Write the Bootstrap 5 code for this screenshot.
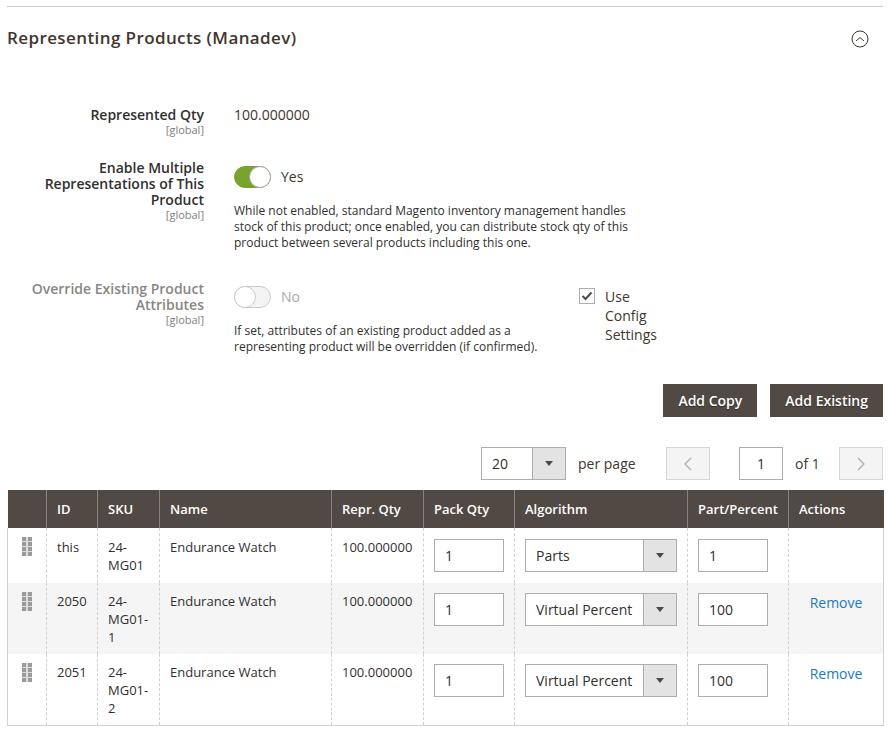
<!DOCTYPE html>
<html lang="en">
<head>
<meta charset="utf-8">
<title>Representing Products</title>
<link rel="stylesheet" href="https://cdn.jsdelivr.net/npm/bootstrap@5.3.0/dist/css/bootstrap.min.css">
<style>
html,body{background:#fff;}
body{font-family:"Open Sans",sans-serif;font-size:14px;line-height:19px;color:#41362f;overflow:hidden;}
.shell{padding:6px 6px 0 7px;}
.sec-head{border-top:1px solid #ccc;height:67px;padding-top:20px;padding-right:14px;}
.sec-title{font-size:17px;line-height:21px;font-weight:600;color:#41362f;margin:0;letter-spacing:.4px;}
.sec-chev{margin-top:3px;}
.field{display:flex;}
.lab{width:197px;flex:none;text-align:right;font-weight:600;line-height:16px;color:#303030;}
.lab.off{color:#8a8683;}
.lab .scope{display:block;font-size:11px;font-weight:400;line-height:14px;color:#808080;}
.val{margin-left:30px;}
.note{font-size:12px;line-height:16px;color:#303030;margin-top:15px;}
.tog-row{display:flex;align-items:center;gap:10px;height:22px;}
.tog-row .tog-txt{margin-bottom:2px;}
.tog-y{margin-top:6px;}
.tog-n{margin-top:5px;}
.tog{width:37px;height:22px;border-radius:11px;position:relative;flex:none;background:#79a22e;border:1px solid #79a22e;}
.tog::after{content:"";position:absolute;top:-1px;right:-1px;width:22px;height:22px;border-radius:50%;background:#fff;border:1px solid #aaa;}
.tog.no{background:#f4f4f4;border-color:#ccc;}
.tog.no::after{right:auto;left:-1px;border-color:#ccc;}
.chk{width:16px;height:16px;border:1px solid #adadad;flex:none;margin-top:1px;display:flex;align-items:center;justify-content:center;}
.admin-btn{background:#514943;color:#fff;border:0;border-radius:0;font-weight:600;font-size:14px;line-height:19px;padding:7px 15px 7px;height:33px;text-shadow:0 1px 1px rgba(0,0,0,.4);}
.box{border:1px solid #adadad;background:#fff;height:33px;display:flex;align-items:center;color:#303030;}
.sel-txt{flex:1;padding-left:10px;white-space:nowrap;}
.sel-arr{width:33px;height:100%;background:#e3e3e3;border-left:1px solid #adadad;display:flex;align-items:center;justify-content:center;flex:none;}
.sel-arr::after{content:"";border-style:solid;border-width:5px 4px 0 4px;border-color:#514943 transparent transparent;}
.pager-btn{width:44px;height:33px;background:#f4f4f4;border:1px solid #d6d6d6;display:flex;align-items:center;justify-content:center;}
.grid-tb{table-layout:fixed;width:876px;border-collapse:collapse;margin:0;font-size:13px;line-height:18px;color:#303030;}
.grid-tb th{background:#514943;color:#fff;font-weight:600;height:38px;padding:0 10px;border:0;border-left:1px solid #8a837f;vertical-align:middle;line-height:18px;}
.grid-tb th:first-child{border-left:0;}
.grid-tb td{padding:9px 10px 0;vertical-align:top;border:0;border-left:1px dashed #d1d1d1;background:transparent;box-shadow:none;}
.grid-tb .r1 td{padding-top:10px;}
.grid-tb td:first-child,.grid-tb .r1 td:first-child{border-left:1px solid #d1d1d1;padding:9px 0 0 14px;}
.grid-tb td:last-child{border-right:1px solid #d1d1d1;}
.grid-tb tbody tr{background:#fff;}
.grid-tb tbody tr.alt{background:#f5f5f5;}
.grid-tb tbody tr:last-child td{border-bottom:1px solid #d1d1d1;}
.r1{height:55px;}.r2{height:71px;}
.mini{margin-top:1px;font-size:14px;}
.qty-in{width:70px;padding-left:10px;}
.pct-in{width:70px;padding-left:10px;}
.algo{width:152px;}
.rm{color:#1979c3;text-decoration:none;font-size:14px;display:block;text-align:center;margin-top:1px;line-height:19px;}
.dragicon{display:block;}
</style>
</head>
<body>
<div class="shell">
  <div class="sec-head d-flex justify-content-between align-items-start">
    <h2 class="sec-title">Representing Products (Manadev)</h2>
    <svg width="18" height="18" viewBox="0 0 18 18" class="sec-chev" aria-hidden="true"><circle cx="9" cy="9" r="8" fill="none" stroke="#41362f" stroke-width="1"/><path d="M5 11l4-3.5 4 3.5" fill="none" stroke="#41362f" stroke-width="1"/></svg>
  </div>

  <div class="field" style="padding-top:32px">
    <div class="lab" style="padding-top:2px">Represented Qty<span class="scope">[global]</span></div>
    <div class="val">100.000000</div>
  </div>

  <div class="field" style="margin-top:23px">
    <div class="lab">Enable Multiple Representations of This Product<span class="scope">[global]</span></div>
    <div class="val">
      <div class="tog-row tog-y"><span class="tog"></span><span class="tog-txt">Yes</span></div>
      <div class="note" style="width:410px">While not enabled, standard Magento inventory management handles stock of this product; once enabled, you can distribute stock qty of this product between several products including this one.</div>
    </div>
  </div>

  <div class="field" style="margin-top:30px">
    <div class="lab off">Override Existing Product Attributes<span class="scope">[global]</span></div>
    <div class="val" style="width:345px">
      <div class="tog-row tog-n"><span class="tog no"></span><span class="tog-txt" style="color:#a8a8a8">No</span></div>
      <div class="note" style="width:320px">If set, attributes of an existing product added as a representing product will be overridden (if confirmed).</div>
    </div>
    <div class="d-flex" style="width:80px;padding-top:6px;gap:10px">
      <span class="chk"><svg width="12" height="10" viewBox="0 0 12 10" aria-hidden="true"><path d="M1.5 5l3 3 6-6.5" fill="none" stroke="#514943" stroke-width="2"/></svg></span>
      <span style="width:55px">Use Config Settings</span>
    </div>
  </div>

  <div class="d-flex justify-content-end" style="gap:13px;margin-top:29px">
    <button class="admin-btn btn" type="button">Add Copy</button>
    <button class="admin-btn btn" type="button">Add Existing</button>
  </div>

  <div class="d-flex justify-content-end align-items-center" style="margin-top:30px;height:33px">
    <div class="box" style="width:85px"><span class="sel-txt">20</span><span class="sel-arr"></span></div>
    <span style="margin-left:12px;width:85px">per page</span>
    <span class="pager-btn" style="margin-left:3px"><svg width="10" height="14" viewBox="0 0 10 14" aria-hidden="true"><path d="M8 1L2 7l6 6" fill="none" stroke="#adadad" stroke-width="1.2"/></svg></span>
    <div class="box justify-content-center" style="width:44px;margin-left:29px">1</div>
    <span style="margin-left:12px;width:43px">of 1</span>
    <span class="pager-btn" style="margin-left:1px"><svg width="10" height="14" viewBox="0 0 10 14" aria-hidden="true"><path d="M2 1l6 6-6 6" fill="none" stroke="#adadad" stroke-width="1.2"/></svg></span>
  </div>

  <table class="table grid-tb" style="margin-top:10px">
    <colgroup><col style="width:39px"><col style="width:51px"><col style="width:62px"><col style="width:172px"><col style="width:92px"><col style="width:91px"><col style="width:173px"><col style="width:101px"><col style="width:95px"></colgroup>
    <thead><tr><th></th><th>ID</th><th>SKU</th><th>Name</th><th>Repr. Qty</th><th>Pack Qty</th><th>Algorithm</th><th>Part/Percent</th><th>Actions</th></tr></thead>
    <tbody>
      <tr class="r1">
        <td><svg class="dragicon" width="10" height="19" aria-hidden="true"><use href="#grip"/></svg></td>
        <td>this</td><td>24-MG01</td><td>Endurance Watch</td><td>100.000000</td>
        <td><div class="box qty-in mini">1</div></td>
        <td><div class="box algo mini"><span class="sel-txt">Parts</span><span class="sel-arr"></span></div></td>
        <td><div class="box pct-in mini">1</div></td>
        <td></td>
      </tr>
      <tr class="r2 alt">
        <td><svg class="dragicon" width="10" height="19" aria-hidden="true"><use href="#grip"/></svg></td>
        <td>2050</td><td>24-MG01-1</td><td>Endurance Watch</td><td>100.000000</td>
        <td><div class="box qty-in mini">1</div></td>
        <td><div class="box algo mini"><span class="sel-txt">Virtual Percent</span><span class="sel-arr"></span></div></td>
        <td><div class="box pct-in mini">100</div></td>
        <td><a class="rm" href="#">Remove</a></td>
      </tr>
      <tr class="r2">
        <td><svg class="dragicon" width="10" height="19" aria-hidden="true"><use href="#grip"/></svg></td>
        <td>2051</td><td>24-MG01-2</td><td>Endurance Watch</td><td>100.000000</td>
        <td><div class="box qty-in mini">1</div></td>
        <td><div class="box algo mini"><span class="sel-txt">Virtual Percent</span><span class="sel-arr"></span></div></td>
        <td><div class="box pct-in mini">100</div></td>
        <td><a class="rm" href="#">Remove</a></td>
      </tr>
    </tbody>
  </table>
</div>
<svg width="0" height="0" class="d-block" aria-hidden="true"><defs><g id="grip"><rect x="0" y="0" width="10" height="19" fill="#dcdcdc"/><g fill="#9a9a9a"><rect x="0" y="0" width="4" height="4"/><rect x="6" y="0" width="4" height="4"/><rect x="0" y="5" width="4" height="4"/><rect x="6" y="5" width="4" height="4"/><rect x="0" y="10" width="4" height="4"/><rect x="6" y="10" width="4" height="4"/><rect x="0" y="15" width="4" height="4"/><rect x="6" y="15" width="4" height="4"/></g></g></defs></svg>
<script src="https://cdn.jsdelivr.net/npm/bootstrap@5.3.0/dist/js/bootstrap.bundle.min.js"></script>
</body>
</html>
